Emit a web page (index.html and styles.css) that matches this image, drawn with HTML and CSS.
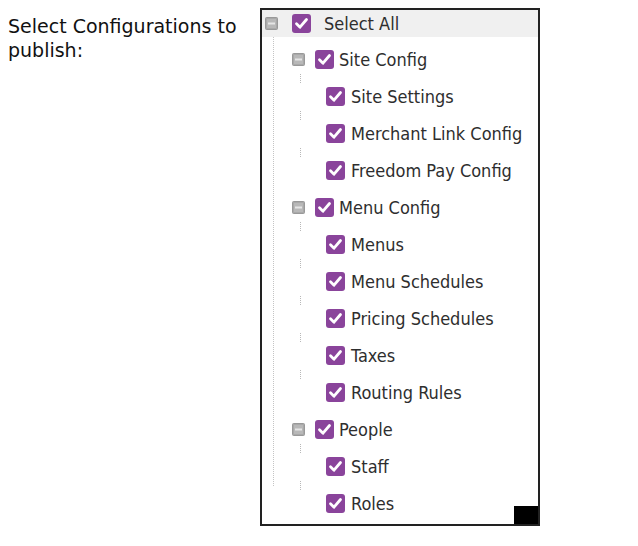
FILE: index.html
```html
<!DOCTYPE html>
<html>
<head>
<meta charset="utf-8">
<link rel="stylesheet" href="styles.css">
</head>
<body>
<div class="page">
  <div class="label">Select Configurations to publish:</div>
  <div class="tree">
    <div class="row root">
      <span class="exp"><svg width="13" height="13" viewBox="0 0 13 13"><rect x="0.5" y="0.5" width="12" height="12" rx="1" fill="#a9a9a9" stroke="#999"/><rect x="2" y="2" width="9" height="9" fill="#b8b8b8"/><rect x="3" y="5.5" width="7" height="2" fill="#e6e6e6"/></svg></span>
      <span class="cb"><svg width="19" height="19" viewBox="0 0 19 19"><path d="M4.5 9.8 L8 13.2 L14.5 5.5" fill="none" stroke="#fff" stroke-width="2.8" stroke-linecap="round" stroke-linejoin="round"/></svg></span>
      <span class="txt">Select All</span>
    </div>
    <div class="kids">
      <div class="row l1">
        <span class="exp"><svg width="13" height="13" viewBox="0 0 13 13"><rect x="0.5" y="0.5" width="12" height="12" rx="1" fill="#a9a9a9" stroke="#999"/><rect x="2" y="2" width="9" height="9" fill="#b8b8b8"/><rect x="3" y="5.5" width="7" height="2" fill="#e6e6e6"/></svg></span>
        <span class="cb"><svg width="19" height="19" viewBox="0 0 19 19"><path d="M4.5 9.8 L8 13.2 L14.5 5.5" fill="none" stroke="#fff" stroke-width="2.8" stroke-linecap="round" stroke-linejoin="round"/></svg></span>
        <span class="txt">Site Config</span>
      </div>
      <div class="row l2"><span class="cb"><svg width="19" height="19" viewBox="0 0 19 19"><path d="M4.5 9.8 L8 13.2 L14.5 5.5" fill="none" stroke="#fff" stroke-width="2.8" stroke-linecap="round" stroke-linejoin="round"/></svg></span><span class="txt">Site Settings</span></div>
      <div class="row l2"><span class="cb"><svg width="19" height="19" viewBox="0 0 19 19"><path d="M4.5 9.8 L8 13.2 L14.5 5.5" fill="none" stroke="#fff" stroke-width="2.8" stroke-linecap="round" stroke-linejoin="round"/></svg></span><span class="txt">Merchant Link Config</span></div>
      <div class="row l2"><span class="cb"><svg width="19" height="19" viewBox="0 0 19 19"><path d="M4.5 9.8 L8 13.2 L14.5 5.5" fill="none" stroke="#fff" stroke-width="2.8" stroke-linecap="round" stroke-linejoin="round"/></svg></span><span class="txt">Freedom Pay Config</span></div>
      <div class="row l1">
        <span class="exp"><svg width="13" height="13" viewBox="0 0 13 13"><rect x="0.5" y="0.5" width="12" height="12" rx="1" fill="#a9a9a9" stroke="#999"/><rect x="2" y="2" width="9" height="9" fill="#b8b8b8"/><rect x="3" y="5.5" width="7" height="2" fill="#e6e6e6"/></svg></span>
        <span class="cb"><svg width="19" height="19" viewBox="0 0 19 19"><path d="M4.5 9.8 L8 13.2 L14.5 5.5" fill="none" stroke="#fff" stroke-width="2.8" stroke-linecap="round" stroke-linejoin="round"/></svg></span>
        <span class="txt">Menu Config</span>
      </div>
      <div class="row l2"><span class="cb"><svg width="19" height="19" viewBox="0 0 19 19"><path d="M4.5 9.8 L8 13.2 L14.5 5.5" fill="none" stroke="#fff" stroke-width="2.8" stroke-linecap="round" stroke-linejoin="round"/></svg></span><span class="txt">Menus</span></div>
      <div class="row l2"><span class="cb"><svg width="19" height="19" viewBox="0 0 19 19"><path d="M4.5 9.8 L8 13.2 L14.5 5.5" fill="none" stroke="#fff" stroke-width="2.8" stroke-linecap="round" stroke-linejoin="round"/></svg></span><span class="txt">Menu Schedules</span></div>
      <div class="row l2"><span class="cb"><svg width="19" height="19" viewBox="0 0 19 19"><path d="M4.5 9.8 L8 13.2 L14.5 5.5" fill="none" stroke="#fff" stroke-width="2.8" stroke-linecap="round" stroke-linejoin="round"/></svg></span><span class="txt">Pricing Schedules</span></div>
      <div class="row l2"><span class="cb"><svg width="19" height="19" viewBox="0 0 19 19"><path d="M4.5 9.8 L8 13.2 L14.5 5.5" fill="none" stroke="#fff" stroke-width="2.8" stroke-linecap="round" stroke-linejoin="round"/></svg></span><span class="txt">Taxes</span></div>
      <div class="row l2"><span class="cb"><svg width="19" height="19" viewBox="0 0 19 19"><path d="M4.5 9.8 L8 13.2 L14.5 5.5" fill="none" stroke="#fff" stroke-width="2.8" stroke-linecap="round" stroke-linejoin="round"/></svg></span><span class="txt">Routing Rules</span></div>
      <div class="row l1">
        <span class="exp"><svg width="13" height="13" viewBox="0 0 13 13"><rect x="0.5" y="0.5" width="12" height="12" rx="1" fill="#a9a9a9" stroke="#999"/><rect x="2" y="2" width="9" height="9" fill="#b8b8b8"/><rect x="3" y="5.5" width="7" height="2" fill="#e6e6e6"/></svg></span>
        <span class="cb"><svg width="19" height="19" viewBox="0 0 19 19"><path d="M4.5 9.8 L8 13.2 L14.5 5.5" fill="none" stroke="#fff" stroke-width="2.8" stroke-linecap="round" stroke-linejoin="round"/></svg></span>
        <span class="txt">People</span>
      </div>
      <div class="row l2"><span class="cb"><svg width="19" height="19" viewBox="0 0 19 19"><path d="M4.5 9.8 L8 13.2 L14.5 5.5" fill="none" stroke="#fff" stroke-width="2.8" stroke-linecap="round" stroke-linejoin="round"/></svg></span><span class="txt">Staff</span></div>
      <div class="row l2"><span class="cb"><svg width="19" height="19" viewBox="0 0 19 19"><path d="M4.5 9.8 L8 13.2 L14.5 5.5" fill="none" stroke="#fff" stroke-width="2.8" stroke-linecap="round" stroke-linejoin="round"/></svg></span><span class="txt">Roles</span></div>
    </div>
    <div class="grip"></div>
  </div>
</div>
</body>
</html>
```
FILE: styles.css
```css
html, body {
  margin: 0;
  padding: 0;
  background: #fff;
}
body {
  padding: 8px;
}
.page {
  display: flex;
  align-items: flex-start;
}
.label {
  width: 252px;
  flex: none;
  padding-top: 6px;
  font-family: "DejaVu Sans", sans-serif;
  font-size: 19px;
  line-height: 24px;
  color: #111;
}
.tree {
  position: relative;
  width: 280px;
  height: 518px;
  box-sizing: border-box;
  border: 2px solid #222;
  font-family: "DejaVu Sans Condensed", "DejaVu Sans", sans-serif;
  font-size: 18px;
  color: #2e2e2e;
}
.row {
  display: flex;
  align-items: center;
  height: 37px;
  position: relative;
}
.row.root {
  height: 27px;
  background: #f0f0f0;
  padding-left: 3px;
}
.exp {
  display: flex;
  width: 13px;
  height: 13px;
}
.cb {
  display: flex;
  width: 19px;
  height: 19px;
  border-radius: 3px;
  background: #8a449b;
}
.root .cb {
  margin-left: 14px;
}
.root .txt {
  margin-left: 13px;
}
.kids {
  position: relative;
  padding-top: 4px;
}
.kids::before {
  content: "";
  position: absolute;
  left: 11px;
  top: 0;
  bottom: 36px;
  border-left: 1px dotted #c4c4c4;
}
.l1 {
  padding-left: 30px;
}
.l1 .cb {
  margin-left: 10px;
}
.l1 .txt {
  margin-left: 5px;
}
.l2 {
  padding-left: 64px;
}
.l2 .txt {
  margin-left: 6px;
}
.l2::before {
  content: "";
  position: absolute;
  left: 38px;
  top: -4px;
  height: 9px;
  border-left: 1px dotted #b8b8b8;
}
.grip {
  position: absolute;
  right: 0;
  bottom: 0;
  width: 24px;
  height: 18px;
  background: #000;
}
```
